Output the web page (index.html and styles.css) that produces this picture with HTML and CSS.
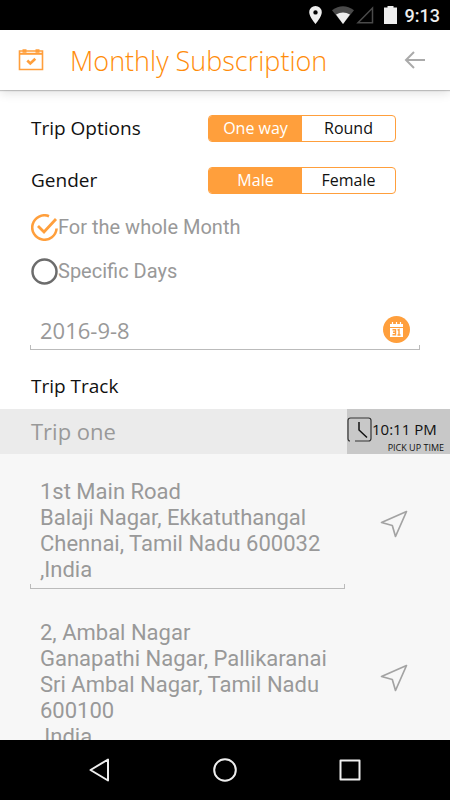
FILE: index.html
```html
<!DOCTYPE html>
<html lang="en">

<head>
    <meta charset="UTF-8">
    <meta name="viewport" content="width=device-width, initial-scale=1.0">
    <title>Monthly Subscription</title>
    <link rel="stylesheet" href="styles.css">
</head>

<body>
    <!-- status bar -->
    <div class="status">
        <svg class="pin" width="13" height="18" viewBox="0 0 13 18">
            <path fill="#eee" fill-rule="evenodd" d="M6.500 0A6.300 6.300 0 0 0 .2 6.300C.2 11 6.500 18 6.500 18S12.800 11 12.800 6.300A6.300 6.300 0 0 0 6.500 0zM6.500 4.200a2.200 2.200 0 1 1 0 4.400a2.200 2.200 0 0 1 0-4.400z" />
        </svg>
        <svg class="wifi" width="22" height="18" viewBox="0 0 22 18">
            <path fill="#4a4a4a" d="M11 18L0 4.300Q11-4 22 4.300z" />
            <path fill="#eee" d="M11 18L4 8.500Q11 4.500 18 8.500z" />
        </svg>
        <svg class="signal" width="18" height="18" viewBox="0 0 18 18">
            <path fill="none" stroke="#4a4a4a" stroke-width="1.500" d="M16.500 2v14.800H2z" />
        </svg>
        <svg class="battery" width="13" height="18" viewBox="0 0 13 18">
            <path fill="#eee" d="M3.500 0h6v1.500H13V18H0V1.500h3.500z" />
        </svg>
        <span>9:13</span>
    </div>

    <header class="header">
        <svg width="26" height="22" viewBox="0 0 26 22" fill="none" stroke="#ff9f3c">
            <path stroke-width="1.600" d="M1.500 2h23v18.500h-23z" />
            <path stroke-width="2" d="M1 4.800h24" />
            <path stroke-width="3.500" d="M4.500 2h4M17.500 2h4" />
            <path stroke-width="2.600" d="M9.300 11.500l3 3l5-4.800" />
        </svg>
        <h1 class="title">Monthly Subscription</h1>
        <button class="back" aria-label="Back">
            <svg width="22" height="18" viewBox="0 0 22 18" fill="none" stroke="#aaa" stroke-width="2">
                <path d="M10 1L2 9l8 8M2 9h19" />
            </svg>
        </button>
    </header>

    <main class="content">
        <form class="options">
            <div class="row">
                <span class="name">Trip Options</span>
                <div class="switch">
                    <button type="button" class="on">One way</button>
                    <button type="button">Round</button>
                </div>
            </div>
            <div class="row">
                <span class="name">Gender</span>
                <div class="switch">
                    <button type="button" class="on">Male</button>
                    <button type="button">Female</button>
                </div>
            </div>
            <div class="days">
                <label class="day">
                    <span class="radio">
                        <input type="radio" name="days" checked>
                        <svg width="27" height="27" viewBox="0 0 27 27" fill="none" stroke="#ff9f3c" stroke-width="2.600">
                            <path d="M18 2.200A12.200 12.200 0 1 0 25.600 14.500" />
                            <path stroke-width="2.800" d="M7 12l6 6L25 5" />
                        </svg>
                    </span>
                    For the whole Month
                </label>
                <label class="day">
                    <span class="radio">
                        <input type="radio" name="days">
                        <svg width="27" height="27" viewBox="0 0 27 27" fill="none" stroke="#6c6c6c" stroke-width="2.500">
                            <circle cx="13.500" cy="13.500" r="12" />
                        </svg>
                    </span>
                    Specific Days
                </label>
            </div>
            <div class="field date">
                <input type="text" value="2016-9-8" aria-label="Date">
                <button type="button" aria-label="Pick a date">
                    <svg width="27" height="27" viewBox="0 0 27 27">
                        <circle cx="13.500" cy="13.500" r="13.500" fill="#ff9f3c" />
                        <path fill="#fff" d="M7 8h13v3H7zM7 12h13v9H7z" />
                        <path fill="none" stroke="#fff" stroke-width="1.200" d="M9.500 6v3M13.500 6v3M17.500 6v3" />
                        <path fill="none" stroke="#ff9f3c" stroke-width="1.400" d="M9.500 13.700h3v5.100h-3M10 16.200h2.500M14.500 14.200l1.500-.7v5.600M14.500 19h3" />
                    </svg>
                </button>
            </div>
            <h2 class="name">Trip Track</h2>
        </form>

        <div class="trip">
            <span class="trip-name">Trip one</span>
            <div class="pickup">
                <div class="time">
                    <svg width="25" height="25" viewBox="0 0 25 25" fill="none" stroke="#333">
                        <path stroke-width="1.200" d="M3 24Q1 24 1 21.500V3.500Q1 1 3.500 1h18Q24 1 24 3.500v18q0 2.500-2.500 2.500H8" />
                        <path stroke="#111" stroke-width="1.500" d="M12 5v8l8 7.500" />
                    </svg>
                    <span>10:11 PM</span>
                </div>
                <div class="hint">PICK UP TIME</div>
            </div>
        </div>

        <div class="places">
            <div class="place">
                <div class="field">
                    <textarea rows="4" aria-label="Pick up address">1st Main Road
Balaji Nagar, Ekkatuthangal
Chennai, Tamil Nadu 600032
,India</textarea>
                </div>
                <button aria-label="Locate pick up address">
                    <svg width="28" height="28" viewBox="0 0 28 28" fill="none" stroke="#a3a3a3" stroke-width="1.700" stroke-linejoin="round">
                        <path d="M26.500 1.500L1.500 12.500l10.800 3L15.500 26.500z" />
                    </svg>
                </button>
            </div>
            <div class="place">
                <div class="field">
                    <textarea rows="5" aria-label="Drop address">2, Ambal Nagar
Ganapathi Nagar, Pallikaranai
Sri Ambal Nagar, Tamil Nadu
600100
,India</textarea>
                </div>
                <button aria-label="Locate drop address">
                    <svg width="28" height="28" viewBox="0 0 28 28" fill="none" stroke="#a3a3a3" stroke-width="1.700" stroke-linejoin="round">
                        <path d="M26.500 1.500L1.500 12.500l10.800 3L15.500 26.500z" />
                    </svg>
                </button>
            </div>
        </div>
    </main>

    <!-- system buttons -->
    <nav class="nav">
        <button aria-label="Back">
            <svg width="24" height="26" viewBox="0 0 24 26">
                <path d="M20 2.500v21L2.500 13z" />
            </svg>
        </button>
        <button aria-label="Home">
            <svg width="24" height="26" viewBox="0 0 24 26">
                <circle cx="12" cy="13" r="10.800" />
            </svg>
        </button>
        <button aria-label="Recent">
            <svg width="24" height="26" viewBox="0 0 24 26">
                <path d="M2.500 3.500h19v19h-19z" />
            </svg>
        </button>
    </nav>
</body>

</html>
```

FILE: styles.css
```css
* {
    padding: 0;
    margin: 0;
    box-sizing: border-box;
}

body {
    display: flex;
    flex-direction: column;
    height: 100vh;
    background-color: #fff;
    font-family: "Open Sans", "Noto Sans", sans-serif;
    color: #111;
    overflow: hidden;
}

button {
    border: 0;
    background: none;
    font: inherit;
    color: inherit;
    cursor: pointer;
}

svg {
    display: block;
    flex: none;
}

.status {
    display: flex;
    flex: none;
    justify-content: flex-end;
    align-items: center;
    height: 30px;
    padding-right: 10px;
    background-color: #000;
    color: #eee;
    font: 500 18px Roboto, sans-serif;
}

.pin {
    margin-right: 10px;
}

.wifi {
    margin-right: 2px;
}

.signal {
    margin-right: 10px;
}

.battery {
    margin-right: 8px;
}

.header {
    display: flex;
    flex: none;
    align-items: center;
    height: 60px;
    padding: 0 24px 0 18px;
    background-color: #fff;
    box-shadow: 0 1px 1px rgba(0, 0, 0, .2), 0 3px 10px rgba(0, 0, 0, .12);
    z-index: 1;
}

.title {
    flex: 1;
    margin-left: 26px;
    font-size: 27px;
    font-weight: 300;
    color: #ff8c0a;
}

.content {
    flex: 1;
    display: flex;
    flex-direction: column;
    min-height: 0;
    overflow: hidden;
}

.options {
    flex: none;
    padding: 25px 30px 9px;
}

.name {
    font-size: 19px;
    font-weight: 400;
    line-height: 27px;
}

/* trip options and gender */
.row {
    display: grid;
    grid-template-columns: 177px 188px;
    align-items: center;
    margin-bottom: 25px;
    padding-left: 1px;
}

.switch {
    display: flex;
    height: 27px;
    border: 1px solid #ff9f3c;
    border-radius: 4px;
    overflow: hidden;
}

.switch button {
    flex: 1;
    font-size: 16px;
    line-height: 25px;
}

.switch .on {
    background-color: #ff9f3c;
    color: #fff;
}

.days {
    display: grid;
    gap: 17px;
    margin-top: -5px;
    padding-left: 1px;
}

.day {
    display: flex;
    align-items: center;
    font: 20px/27px Roboto, sans-serif;
    color: #999;
}

.radio {
    display: grid;
}

.radio input,
.radio svg {
    grid-area: 1 / 1;
}

.radio input {
    appearance: none;
}

/* line with short ticks at both ends */
.field {
    background: linear-gradient(#bbb, #bbb) left bottom / 1px 4px no-repeat,
        linear-gradient(#bbb, #bbb) right bottom / 1px 4px no-repeat;
    border-bottom: 1px solid #bbb;
}

.field input,
.field textarea {
    display: block;
    width: 100%;
    padding: 0 10px;
    border: 0;
    outline: 0;
    background: none;
    color: #999;
    font-size: 22px;
}

.date {
    display: flex;
    align-items: center;
    height: 40px;
    margin: 25px 0 23px;
    padding-right: 10px;
}

.date input {
    flex: 1;
    min-width: 0;
    font-family: inherit;
}

.options h2 {
    padding-left: 1px;
}

.trip {
    display: flex;
    flex: none;
    height: 45px;
    background-color: #ebebeb;
}

.trip-name {
    flex: 1;
    padding-left: 31px;
    font-size: 22px;
    line-height: 45px;
    color: #999;
}

.pickup {
    width: 103px;
    padding-top: 8px;
    background-color: #c8c8c8;
}

.time {
    display: flex;
    font-size: 15px;
    line-height: 24px;
    white-space: nowrap;
}

.hint {
    padding-right: 6px;
    font-size: 9px;
    line-height: 12px;
    text-align: right;
}

.places {
    flex: 1;
    display: flex;
    flex-direction: column;
    gap: 31px;
    min-height: 0;
    padding: 25px 42px 0 30px;
    background-color: #f7f7f7;
}

.place {
    display: flex;
    flex: none;
    gap: 35px;
}

.place .field {
    flex: 1;
    padding-bottom: 5px;
}

.place textarea {
    font-family: Roboto, sans-serif;
    line-height: 26px;
    white-space: pre;
    resize: none;
    overflow: hidden;
}

.place button {
    padding-bottom: 20px;
}

.nav {
    display: flex;
    flex: none;
    justify-content: center;
    align-items: center;
    gap: 101px;
    height: 60px;
    background-color: #000;
}

.nav svg {
    fill: none;
    stroke: #eee;
    stroke-width: 2;
    stroke-linejoin: round;
}
```
